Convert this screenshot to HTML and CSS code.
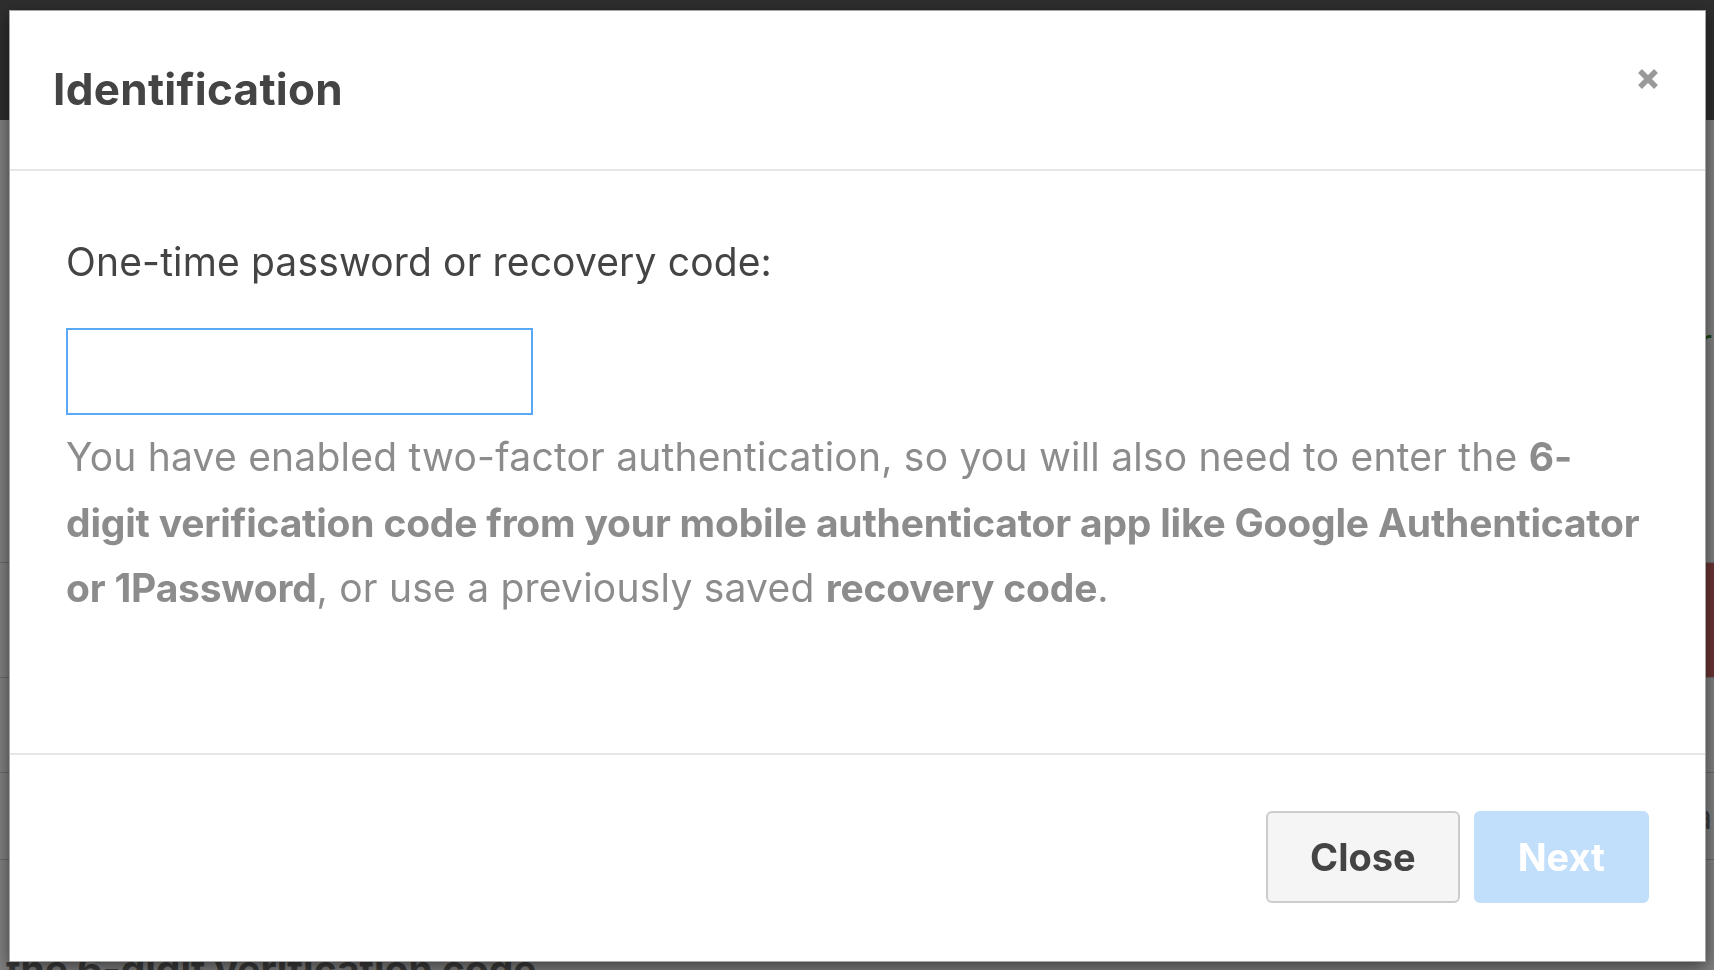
FILE: index.html
```html
<!DOCTYPE html>
<html lang="en">
<head>
    <meta charset="UTF-8">
    <meta name="viewport" content="width=device-width, initial-scale=1.0">
    <title>Identification</title>
    <link rel="stylesheet" href="styles.css">
</head>
<body>
    <!-- page behind the dialog -->
    <div class="site">
        <div class="site-header"></div>
        <div class="site-content">
            <div class="row row-1"><span class="row-tail green">r</span></div>
            <div class="row row-2"><span class="badge">2</span></div>
            <div class="row row-3"></div>
            <div class="row row-4"><span class="row-tail">a</span></div>
            <p class="site-note">the 6-digit verification code</p>
        </div>
    </div>

    <div class="backdrop"></div>

    <!-- Dialog -->
    <div class="modal">
        <div class="modal-header">
            <h2 class="modal-title">Identification</h2>
            <button class="close-btn" aria-label="Close">
                <svg width="24" height="24" viewBox="0 0 24 24">
                    <path d="M4 4 L20 20 M20 4 L4 20" stroke="#999" stroke-width="5.5" fill="none"/>
                </svg>
            </button>
        </div>
        <div class="modal-body">
            <label for="otp" class="field-label">One-time password or recovery code:</label>
            <input type="text" id="otp" class="otp-input">
            <p class="help-text">
                You have enabled two-factor authentication, so you will also need to enter the
                <b>6-digit verification code from your mobile authenticator app like Google Authenticator or 1Password</b>,
                or use a previously saved <b>recovery code</b>.
            </p>
        </div>
        <div class="modal-footer">
            <button class="btn btn-default">Close</button>
            <button class="btn btn-primary" disabled>Next</button>
        </div>
    </div>
</body>
</html>
```

FILE: styles.css
```css
body{
    margin: 0;
    background-color: white;
    font-family: Inter, "Liberation Sans", sans-serif;
    overflow: hidden;
}
.site-header{
    height: 120px;
    background-color: #5d5d5d;
}
.row{
    display: flex;
    justify-content: flex-end;
    align-items: center;
    border-bottom: 1px solid #d0d0d0;
    font-size: 34px;
    color: #777;
}
.row-1{ height: 442px; }
.row-2{ height: 114px; }
.row-3{ height: 94px; }
.row-4{ height: 86px; }
.row-tail{
    padding-right: 2px;
}
.green{
    color: #3c8a2a;
}
.badge{
    width: 30px;
    height: 114px;
    background-color: #d46666;
    color: white;
    display: flex;
    align-items: center;
}
.site-note{
    margin: 0;
    padding: 85px 0 0 6px;
    font-size: 39px;
    font-weight: bold;
    color: #777;
}
.backdrop{
    position: fixed;
    top: 0;
    left: 0;
    width: 100%;
    height: 100%;
    background-color: rgba(0,0,0,0.5);
}
.modal{
    position: fixed;
    top: 10px;
    left: 9px;
    width: 1697px;
    height: 952px;
    box-sizing: border-box;
    background-color: white;
    border: 1px solid rgba(0,0,0,0.35);
    box-shadow: 0 5px 15px rgba(0,0,0,0.5);
    display: flex;
    flex-direction: column;
}
.modal-header{
    height: 160px;
    box-sizing: border-box;
    border-bottom: 2px solid #e6e6e6;
    padding: 0 45px 0 43px;
    display: flex;
    align-items: center;
    justify-content: space-between;
}
.modal-title{
    margin: 0 0 2px 0;
    font-size: 44px;
    font-weight: bold;
    letter-spacing: 0.3px;
    color: #444;
}
.close-btn{
    background: none;
    border: none;
    padding: 0;
    margin-bottom: 22px;
    display: flex;
}
.modal-body{
    flex: 1;
    padding: 67px 56px 0 56px;
}
.field-label{
    display: block;
    font-size: 39px;
    line-height: 47px;
    letter-spacing: 0.15px;
    color: #444;
}
.otp-input{
    display: block;
    margin-top: 43px;
    width: 467px;
    height: 87px;
    box-sizing: border-box;
    border: 2px solid #5aa9f6;
    outline: none;
    font-size: 36px;
    font-family: inherit;
}
.help-text{
    margin: 9px 0 0 0;
    font-size: 39px;
    line-height: 65.5px;
    letter-spacing: 0.22px;
    color: #8c8c8c;
}
.help-text b{
    font-weight: bold;
    letter-spacing: -0.2px;
}
.modal-footer{
    height: 208px;
    box-sizing: border-box;
    border-top: 2px solid #e6e6e6;
    padding: 0 56px 2px 56px;
    display: flex;
    justify-content: flex-end;
    align-items: center;
    gap: 14px;
}
.btn{
    height: 92px;
    padding: 0 42px;
    border-radius: 6px;
    font-family: inherit;
    font-size: 38px;
    font-weight: bold;
}
.btn-default{
    background-color: #f5f5f5;
    border: 2px solid #cccccc;
    color: #444;
}
.btn-primary{
    background-color: #c1dffa;
    border: 2px solid #c1dffa;
    color: white;
}
```
